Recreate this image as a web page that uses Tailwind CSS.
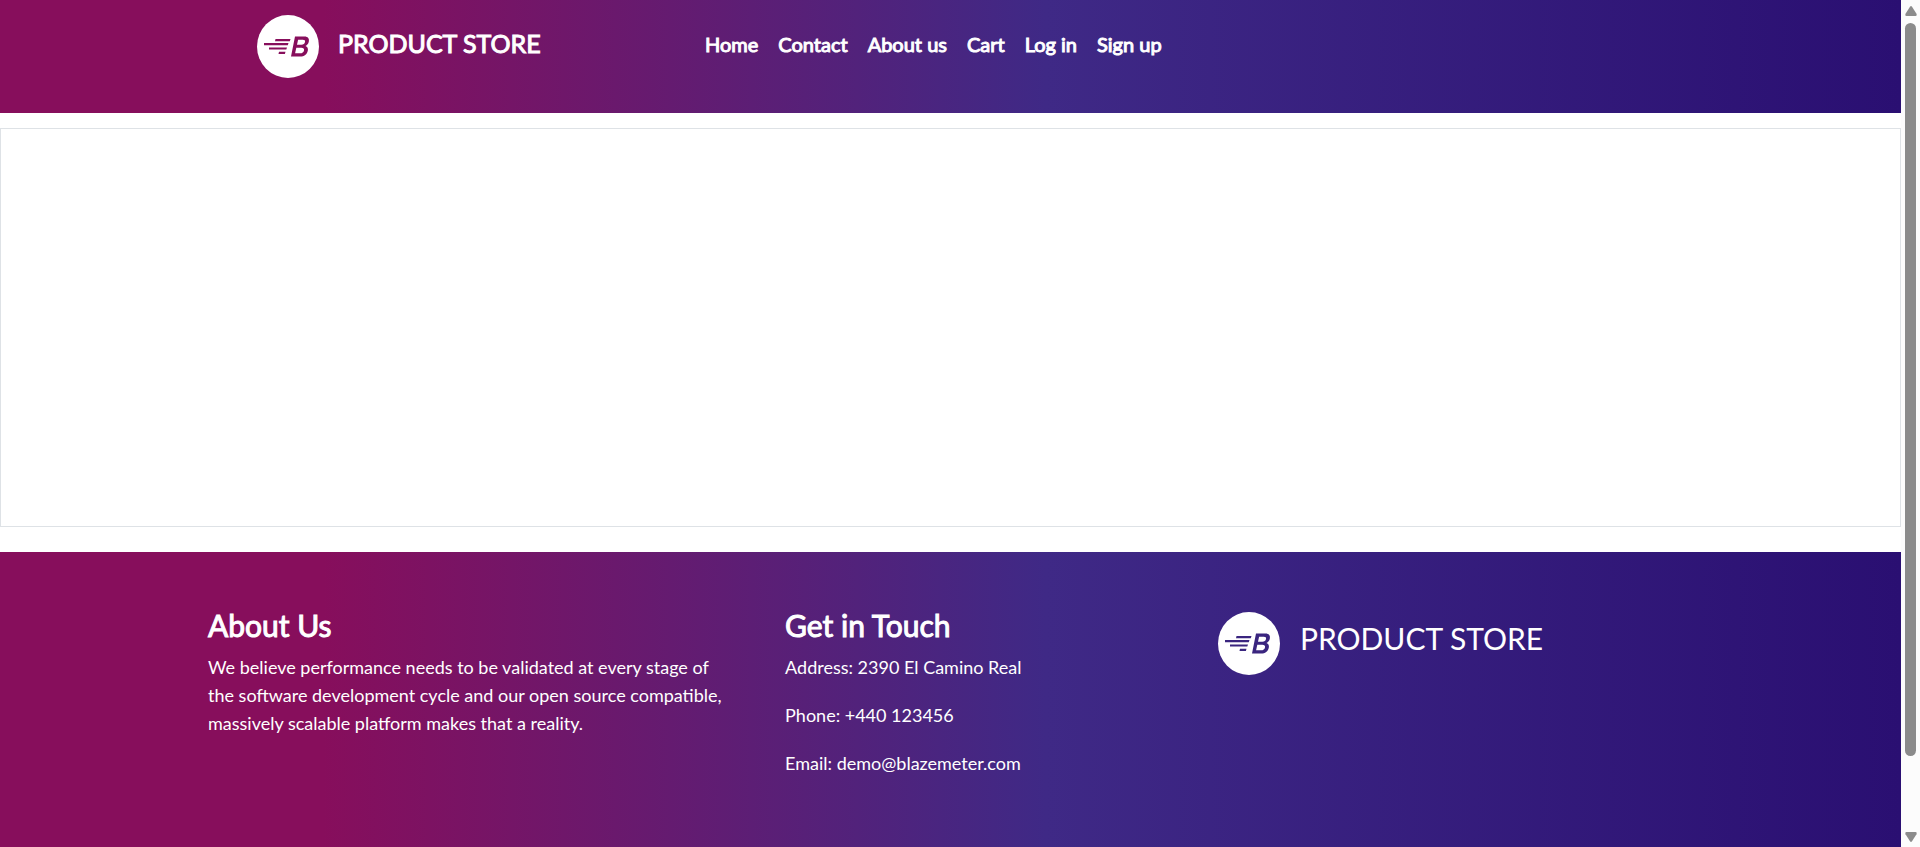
<!DOCTYPE html>
<html lang="en">
<head>
<meta charset="utf-8">
<title>Product Store</title>
<script src="https://cdn.jsdelivr.net/npm/@tailwindcss/browser@4"></script>
</head>
<body class="flex h-screen bg-white font-['Lato',sans-serif] text-white">
<svg class="hidden">
  <symbol id="logo" viewBox="0 0 62 63">
    <ellipse cx="31" cy="31.5" rx="31" ry="31.5" fill="#fff"/>
    <g fill="currentColor">
      <path d="M18.500 24h15l-.7 2.200H18zM7 28h24.500l-.7 2.200H7zM12 32.400h18l-.7 2.100H12zM22 36.800h6.500l-.6 2.200H21.500z"/>
      <path fill-rule="evenodd" d="M38 21.500H47.500c3.500 0 5 2.200 4.300 5.200-.5 2.200-1.600 3.400-3.300 4.200 2 .8 2.800 2.500 2.300 4.800-.8 3.800-3.600 5.800-7.600 5.800h-9.200zm3.100 3.200-1.100 5h4.400c2 0 3.200-.8 3.600-2.600.4-1.600-.4-2.400-2.200-2.400zm-1.800 8.100-1.200 5.500h5c2.200 0 3.500-.9 3.900-2.800.4-1.800-.6-2.700-2.700-2.700z"/>
    </g>
  </symbol>
</svg>
<div class="flex min-w-0 flex-1 flex-col overflow-hidden">
  <header class="flex h-[113px] shrink-0 items-start bg-[linear-gradient(to_right,#870e5c_0%,#870e5c_17%,#3f2986_55%,#2a0f72_100%)] pl-[257px]">
    <a href="#" class="mt-[15px] flex w-[448px] shrink-0 items-start gap-[19px]">
      <svg class="h-[63px] w-[62px] text-[#870e5c]" aria-hidden="true"><use href="#logo"/></svg>
      <span class="mt-3 text-[25px] leading-8 [-webkit-text-stroke:1px_white]">PRODUCT STORE</span>
    </a>
    <nav class="mt-[29px] flex gap-5 text-[20px] leading-[30px] whitespace-nowrap [-webkit-text-stroke:1px_white]">
      <a href="#">Home</a>
      <a href="#">Contact</a>
      <a href="#">About us</a>
      <a href="#">Cart</a>
      <a href="#">Log in</a>
      <a href="#">Sign up</a>
    </nav>
  </header>
  <main class="mt-[15px] mb-[25px] h-[399px] shrink-0 border border-[#dee2e6]"></main>
  <footer class="grid flex-1 grid-cols-[4fr_3fr_4fr] items-start bg-[linear-gradient(to_right,#870e5c_0%,#870e5c_17%,#3f2986_55%,#2a0f72_100%)] pt-[55px] pr-[106px] pl-52 text-[18px] leading-7">
    <section class="pr-12">
      <h2 class="mb-2.5 text-[30px] leading-9 [-webkit-text-stroke:1px_white]">About Us</h2>
      <p>We believe performance needs to be validated at every stage of the software development cycle and our open source compatible, massively scalable platform makes that a reality.</p>
    </section>
    <section class="flex flex-col">
      <h2 class="mb-2.5 text-[30px] leading-9 [-webkit-text-stroke:1px_white]">Get in Touch</h2>
      <div class="flex flex-col gap-5">
        <p>Address: 2390 El Camino Real</p>
        <p>Phone: +440 123456</p>
        <p>Email: demo@blazemeter.com</p>
      </div>
    </section>
    <section class="flex items-start gap-5 pt-[5px]">
      <svg class="h-[63px] w-[62px] shrink-0 text-[#3a257f]" aria-hidden="true"><use href="#logo"/></svg>
      <h2 class="mt-2 text-[30px] leading-9">PRODUCT STORE</h2>
    </section>
  </footer>
</div>
<div class="flex w-[19px] shrink-0 flex-col items-center bg-[#fcfcfc] pt-[6px] pb-[5px]" aria-hidden="true">
  <svg class="h-[10px] w-3" viewBox="0 0 12 10"><path d="M5 .8Q6-.6 7 .8L11.500 7.800Q12.200 10 10.500 10h-9Q-.2 10 .5 7.800z" fill="#8b8b8b"/></svg>
  <div class="mt-[7px] h-[733px] w-[11px] rounded-full bg-[#8b8b8b]"></div>
  <svg class="mt-auto h-[10px] w-3 rotate-180" viewBox="0 0 12 10"><path d="M5 .8Q6-.6 7 .8L11.500 7.800Q12.200 10 10.500 10h-9Q-.2 10 .5 7.800z" fill="#8b8b8b"/></svg>
</div>
</body>
</html>
